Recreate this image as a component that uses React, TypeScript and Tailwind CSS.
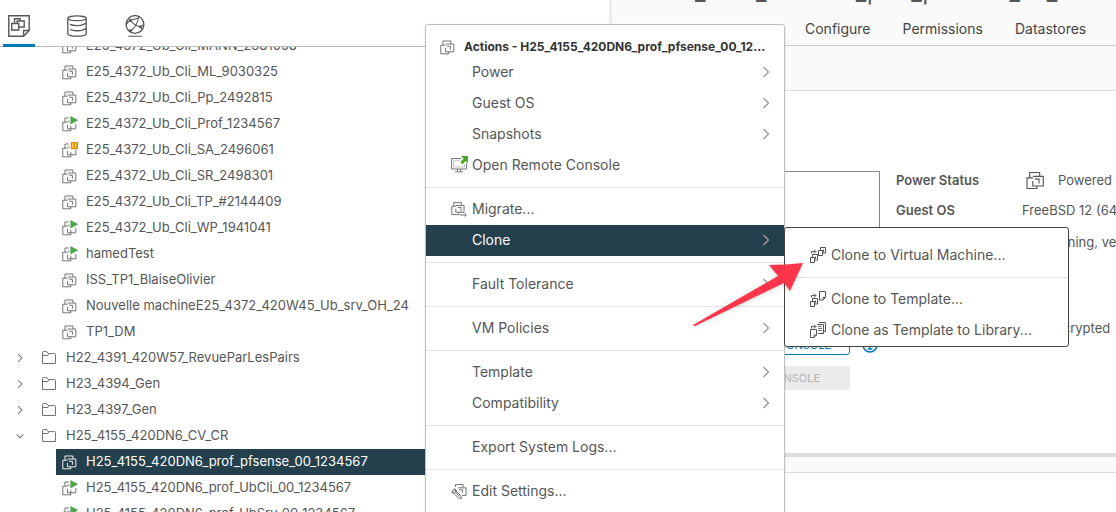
import type { ReactNode } from "react";

type VmState = "off" | "on" | "suspended";

const tree: { name: string; state: VmState }[] = [
  { name: "E25_4372_Ub_Cli_MANN_2381058", state: "off" },
  { name: "E25_4372_Ub_Cli_ML_9030325", state: "off" },
  { name: "E25_4372_Ub_Cli_Pp_2492815", state: "off" },
  { name: "E25_4372_Ub_Cli_Prof_1234567", state: "on" },
  { name: "E25_4372_Ub_Cli_SA_2496061", state: "suspended" },
  { name: "E25_4372_Ub_Cli_SR_2498301", state: "off" },
  { name: "E25_4372_Ub_Cli_TP_#2144409", state: "off" },
  { name: "E25_4372_Ub_Cli_WP_1941041", state: "on" },
  { name: "hamedTest", state: "on" },
  { name: "ISS_TP1_BlaiseOlivier", state: "off" },
  { name: "Nouvelle machineE25_4372_420W45_Ub_srv_OH_24", state: "off" },
  { name: "TP1_DM", state: "off" },
];

const folders = [
  { name: "H22_4391_420W57_RevueParLesPairs", open: false },
  { name: "H23_4394_Gen", open: false },
  { name: "H23_4397_Gen", open: false },
  { name: "H25_4155_420DN6_CV_CR", open: true },
];

const children: { name: string; state: VmState; selected?: boolean }[] = [
  { name: "H25_4155_420DN6_prof_pfsense_00_1234567", state: "off", selected: true },
  { name: "H25_4155_420DN6_prof_UbCli_00_1234567", state: "on" },
  { name: "H25_4155_420DN6_prof_UbSrv_00_1234567", state: "on" },
];

function VmIcon({ state = "off", className = "size-4" }: { state?: VmState; className?: string }) {
  return (
    <svg viewBox="0 0 20 20" className={className} fill="none" stroke="currentColor" strokeWidth="1.15" aria-hidden="true">
      <g transform="translate(0 1.5)">
        {state === "off" ? (
          <path d="M3.700 6.200V1h10v3.700M7 6.300H1V17h10v-2.500M7 4.800h10.300v9.700H6.800V9.500M8.800 7.600h4.200V12" />
        ) : (
          <path d="M3.700 6.200V1H8.500M7 6.300H1V17h10v-2.500M7 5h2.500M17.300 8.500v6H6.800V9.500M11 14.500V11" />
        )}
      </g>
      {state === "on" && <path d="M10.500 0v10.500L20.500 5.200z" fill="#4ea64b" stroke="none" />}
      {state === "suspended" && (
        <g stroke="none">
          <path d="M11 0h9v9h-9z" fill="#d99000" />
          <path d="M12.500 1.500h2v6h-2zM16.200 1.500h2v6h-2z" fill="#fdcf4b" />
        </g>
      )}
    </svg>
  );
}

function Chevron({ down = false, className = "size-4" }: { down?: boolean; className?: string }) {
  return (
    <svg viewBox="0 0 16 16" className={className} fill="none" stroke="currentColor" strokeWidth="1.4" aria-hidden="true">
      <path d={down ? "M3.5 6 8 10.5 12.5 6" : "M5.5 3 10.500 8l-5 5"} />
    </svg>
  );
}

function FolderIcon() {
  return (
    <svg viewBox="0 0 14 14" className="size-3.5" fill="none" stroke="#737373" strokeWidth="1" aria-hidden="true">
      <path d="M.5 12.500v-11q0-.9.9-.9h3.400l1.400 2h6.400q.9 0 .9.9v9z" />
      <path d="M.5 4.500h5.300l.8-1.500" />
    </svg>
  );
}

function ConsoleIcon() {
  return (
    <svg viewBox="0 0 17 17" className="size-[17px]" fill="none" stroke="#777" strokeWidth="1" aria-hidden="true">
      <path d="M10 2.500H.6v10.500h14.800V7" />
      <path d="M9 4.300H2.500v6.700h11V8.500" stroke="#c4c4c4" />
      <path d="M6.500 13v2.500M9.500 13v2.500M4 15.800h8" />
      <path d="M10 0h7v7l-2.200-2.100-3.300 3.300-2.200-2.200 3.300-3.300z" fill="#4ba526" stroke="none" />
    </svg>
  );
}

function MigrateIcon() {
  return (
    <svg viewBox="0 0 20 20" className="size-4" fill="none" stroke="#707070" strokeWidth="1.2" aria-hidden="true">
      <g transform="translate(0 1)">
        <path d="M3.500 5.500V1H13v3.500M6.500 5.500H1V16h9v-3" />
        <path d="M6 4.500h10.300V13H6V8.500M8.500 7h4v5" />
        <path d="M11 16.500h8M17 14.500l2 2-2 2" />
      </g>
    </svg>
  );
}

function EditIcon() {
  return (
    <svg viewBox="0 0 20 20" className="size-4" fill="none" stroke="#666" strokeWidth="1.2" aria-hidden="true">
      <path d="M5.500 5V2h9.500v3M9 6h9.800v9.500H14M10 8.500h4.500V12" />
      <path d="M4.500 8.300 12.300 16l.7 3.300-3.700-.6L1.500 11z" fill="white" />
      <path d="m.8 11.200 3.800-4 2.200 2-3.600 4zM5.500 11.500l5 5" />
    </svg>
  );
}

function CloneIcon({ kind }: { kind: "vm" | "template" | "library" }) {
  return (
    <svg viewBox="0 0 16 16" className="size-4" fill="none" stroke="#555" strokeWidth="1" aria-hidden="true">
      <path d="M1.500 6.500v-2h4M4 2.500l2 2-2 2" />
      {kind === "library" ? (
        <path d="M.5 7.500h6V13L4 15.500H.5zM6.500 13H4v2.500" />
      ) : (
        <path d="M.5 10.500h4v5h-4zM2.500 10V7.500h5V13H5M5.500 9.500v2h-1" />
      )}
      {kind === "vm" && <path d="M8.500 3.500h4v5h-4zM10.500 3V.5h5V6H13M13.500 2.500v2h-1" />}
      {kind === "template" && <path d="M9.500.5h6v6L13 9H9.500zM15.500 6.500H13V9" />}
      {kind === "library" && (
        <>
          <path d="M7 2.500h6.500v9H8M9 .5h6.500v9H14" />
          <path d="M8 4.500h4M8 6.500h4M8 8.500h4" strokeWidth=".8" />
        </>
      )}
    </svg>
  );
}

function VmRow({ name, state, selected = false }: { name: string; state: VmState; selected?: boolean }) {
  return (
    <li className={`ml-14 flex h-[26px] items-center gap-2 pl-1.5 ${selected ? "bg-[#25404d] text-white" : ""}`}>
      <VmIcon state={state} className={selected ? "size-4 shrink-0 text-white" : "size-4 shrink-0 text-[#666]"} />
      <span className="whitespace-nowrap">{name}</span>
    </li>
  );
}

function InventoryTabs() {
  return (
    <nav className="flex h-[47px] shrink-0 items-end gap-[26px] border-b border-[#bbb] pl-[3px] text-[#565656]" aria-label="Inventory">
      <button aria-label="VMs and templates" className="-mb-px flex h-8 w-8 justify-center border-b-[3px] border-[#0079b8]">
        <svg viewBox="0 0 22 22" className="size-[22px]" fill="none" stroke="currentColor" strokeWidth="1.4">
          <path d="M.8.8h20.400v14.700l-5.600 5.700H.8zM21 15.500h-5.400V21" />
          <path d="M3.700 8.500h7V15h-7zM6.500 8V3.800h5.700V6M11 12h5.200V6H9.200v2.500" />
        </svg>
      </button>
      <button aria-label="Storage" className="-mb-px flex h-8 w-8 justify-center border-b-[3px] border-transparent">
        <svg viewBox="0 0 20 22" className="h-[22px] w-5" fill="none" stroke="currentColor" strokeWidth="1.3">
          <path d="M.8 3.300C.8.100 19.200.100 19.200 3.300S.8 6.500.8 3.300zM.8 3.300v15.400c0 3.300 18.400 3.300 18.400 0V3.300" />
          <path d="M3 9.300c3.500 1.600 10 1.600 13 .3l3-1.200M3 14.500c3.500 1.600 10 1.600 13 .3l3-1.200" />
        </svg>
      </button>
      <button aria-label="Networking" className="-mb-px flex h-8 w-8 justify-center border-b-[3px] border-transparent">
        <svg viewBox="0 0 20 22" className="h-[22px] w-5" fill="none" stroke="currentColor" strokeWidth="1.3">
          <circle cx="10" cy="9.500" r="8.900" />
          <path d="M5.500 16C10 13 12.700 8.500 13.700 1.500M5.300 5.200c2.700 3.800 6 5.800 10.200 6.600M1.200 10c1-2.200 2.500-3.700 4.100-4.800L13.500 3M15.500 11.800l1.500 2.500M15.500 11.800l3-2M3.200 21.300h13.600" strokeWidth="1.1" />
          <g fill="currentColor" stroke="none">
            <circle cx="5.400" cy="5.200" r="1.500" />
            <circle cx="5.500" cy="15.600" r="1.500" />
            <circle cx="15.500" cy="11.800" r="1.500" />
          </g>
        </svg>
      </button>
    </nav>
  );
}

function MenuItem({ label, icon, submenu = false, active = false }: { label: string; icon?: ReactNode; submenu?: boolean; active?: boolean }) {
  return (
    <li role="none">
      <button
        role="menuitem"
        className={`flex h-[31px] w-full items-center pr-2.5 pb-0.5 pl-6 text-left text-[14px] whitespace-nowrap ${active ? "bg-[#25404d] text-white" : "text-[#565656]"}`}
      >
        <span className="flex w-[22px] shrink-0 items-center pl-px">{icon}</span>
        <span className="flex-1">{label}</span>
        {submenu && <Chevron className="size-4 text-[#9a9a9a]" />}
      </button>
    </li>
  );
}

function Divider() {
  return <li role="separator" className="my-1.5 h-px bg-[#e3e3e3]" />;
}

function ActionsMenu() {
  return (
    <div className="absolute top-6 left-[425px] w-[360px] rounded-[3px] border border-[#bfbfbf] bg-white pt-3 pb-6 shadow-sm">
      <div className="flex h-5 items-center gap-2 pr-3 pl-3.5">
        <VmIcon className="size-4 shrink-0 text-[#666]" />
        <h2 className="truncate text-[12px] font-bold text-[#333]">Actions - H25_4155_420DN6_prof_pfsense_00_1234567</h2>
      </div>
      <ul role="menu">
        <MenuItem label="Power" submenu />
        <MenuItem label="Guest OS" submenu />
        <MenuItem label="Snapshots" submenu />
        <MenuItem label="Open Remote Console" icon={<ConsoleIcon />} />
        <Divider />
        <MenuItem label="Migrate..." icon={<MigrateIcon />} />
        <MenuItem label="Clone" submenu active />
        <Divider />
        <MenuItem label="Fault Tolerance" submenu />
        <Divider />
        <MenuItem label="VM Policies" submenu />
        <Divider />
        <MenuItem label="Template" submenu />
        <MenuItem label="Compatibility" submenu />
        <Divider />
        <MenuItem label="Export System Logs..." />
        <Divider />
        <MenuItem label="Edit Settings..." icon={<EditIcon />} />
      </ul>
    </div>
  );
}

function CloneMenu() {
  return (
    <ul role="menu" className="absolute top-[227px] left-[784px] w-[285px] rounded-[3px] border border-[#444] bg-white pt-3">
      <MenuItem label="Clone to Virtual Machine..." icon={<CloneIcon kind="vm" />} />
      <Divider />
      <MenuItem label="Clone to Template..." icon={<CloneIcon kind="template" />} />
      <MenuItem label="Clone as Template to Library..." icon={<CloneIcon kind="library" />} />
    </ul>
  );
}

function Inventory() {
  return (
    <aside className="flex w-[609px] shrink-0 flex-col bg-white">
      <InventoryTabs />
      <div className="min-h-0 flex-1 overflow-hidden">
        <ul className="-mt-3.5 text-[13px] text-[#565656]">
          {tree.map((vm) => (
            <VmRow key={vm.name} {...vm} />
          ))}
          {folders.map((f) => (
            <li key={f.name} className="flex h-[26px] items-center pl-3.5">
              <Chevron down={f.open} className="size-3 shrink-0 text-[#666]" />
              <span className="mr-2.5 ml-4 shrink-0">
                <FolderIcon />
              </span>
              <span>{f.name}</span>
            </li>
          ))}
          {children.map((vm) => (
            <VmRow key={vm.name} {...vm} />
          ))}
        </ul>
      </div>
    </aside>
  );
}

function Details() {
  return (
    <main className="flex min-w-0 flex-1 flex-col overflow-hidden bg-white text-[#565656]">
      <header className="flex h-[46px] shrink-0 flex-col justify-between border-b border-[#ccc] bg-[#fafafa]">
        <h1 className="-mt-[22px] pl-[38px] text-[23px] leading-7 whitespace-nowrap">H25_4155_420DN6_prof_pfsense_00_1234567</h1>
        <nav className="flex gap-8 pl-[193px] text-[14px] leading-8 text-[#444]" aria-label="Views">
          <a href="#configure">Configure</a>
          <a href="#permissions">Permissions</a>
          <a href="#datastores">Datastores</a>
        </nav>
      </header>
      <div className="h-[45px] shrink-0 border-b border-[#ddd] bg-[#fafafa]" />
      <section className="flex h-[362px] shrink-0 gap-4 pt-20 pl-4">
        <div className="flex w-[252px] shrink-0 flex-col">
          <div className="h-[140px] border border-[#888]" />
          <div className="mt-5 flex h-6 items-center gap-3">
            <button className="h-6 w-[222px] shrink-0 rounded-[3px] border border-[#0079b8] pt-1 pr-[18px] text-right text-[11px] text-[#0079b8]">CONSOLE</button>
            <svg viewBox="0 0 16 16" className="mt-1 size-4 shrink-0 text-[#0079b8]" fill="none" stroke="currentColor" strokeWidth="1.500" aria-hidden="true">
              <circle cx="8" cy="8" r="7" />
              <path d="M8 4v1.500M6.500 7.500H8V12M5.500 12h5" />
            </svg>
          </div>
          <button disabled className="mt-[11px] h-6 w-[222px] rounded-[3px] bg-[#ebebeb] pr-[30px] text-right text-[11px] text-[#b5b5b5]">CONSOLE</button>
        </div>
        <dl className="grid grid-cols-[126px_1fr] content-start text-[13px] leading-[18px] whitespace-nowrap">
          <dt className="h-[30px] font-semibold">Power Status</dt>
          <dd className="flex h-[18px] items-center gap-3 pl-1">
            <VmIcon className="size-5 shrink-0" />
            Powered Off
          </dd>
          <dt className="h-8 font-semibold">Guest OS</dt>
          <dd>FreeBSD 12 (64-bit)</dd>
          <dt className="h-[86px]" />
          <dd>Not running, version:2147483647</dd>
          <dt />
          <dd>Not encrypted</dd>
        </dl>
      </section>
      <div className="h-1 shrink-0 bg-[#ddd]" />
      <div className="h-4 shrink-0 border-b border-[#ddd] bg-[#fafafa]" />
    </main>
  );
}

export default function App() {
  return (
    <div className="relative flex h-screen overflow-hidden bg-white font-['Inter','Liberation_Sans',sans-serif]">
      <Inventory />
      <div className="w-[3px] shrink-0 bg-[#ededed]" />
      <Details />
      <ActionsMenu />
      <CloneMenu />
      <svg viewBox="0 0 112 66" className="pointer-events-none absolute top-[262px] left-[692px] h-[66px] w-28 drop-shadow-sm" aria-hidden="true">
        <path d="M1 63 86 14l-9-11q17 0 34-2L98 29l-6-8L3 64q-2 0-2-1z" fill="#ff364b" />
      </svg>
    </div>
  );
}
